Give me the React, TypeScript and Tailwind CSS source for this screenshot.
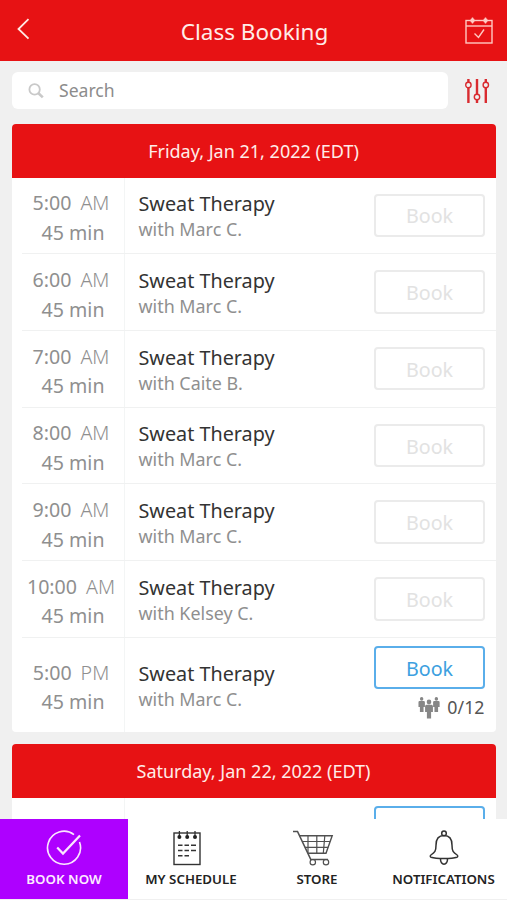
import type { ReactNode } from 'react';

interface ClassItem {
  time: string;
  period: 'AM' | 'PM';
  instructor: string;
  spots?: string;
}

const fridayClasses: ClassItem[] = [
  { time: '5:00', period: 'AM', instructor: 'Marc C.' },
  { time: '6:00', period: 'AM', instructor: 'Marc C.' },
  { time: '7:00', period: 'AM', instructor: 'Caite B.' },
  { time: '8:00', period: 'AM', instructor: 'Marc C.' },
  { time: '9:00', period: 'AM', instructor: 'Marc C.' },
  { time: '10:00', period: 'AM', instructor: 'Kelsey C.' },
  { time: '5:00', period: 'PM', instructor: 'Marc C.', spots: '0/12' },
];

function BackIcon() {
  return (
    <svg width="14" height="22" viewBox="0 0 14 22" fill="none" stroke="#ffe9e4" strokeWidth="1.8">
      <path d="M12.5 1.2 2.5 11l10 9.6" />
    </svg>
  );
}

function CalendarIcon() {
  return (
    <svg width="28" height="28" viewBox="0 0 28 28" fill="none" stroke="#ffc9c2" strokeWidth="1.4">
      <rect x="1" y="3.5" width="26" height="22.5" />
      <path d="M1 9h26" />
      <circle cx="7.5" cy="3.5" r="2.2" fill="#ffc9c2" stroke="none" />
      <circle cx="20.5" cy="3.5" r="2.2" fill="#ffc9c2" stroke="none" />
      <path d="M7.5 .5v6M20.5 .5v6" />
      <path d="m9.5 16.5 4 4 5.5-8" />
    </svg>
  );
}

function SearchIcon() {
  return (
    <svg width="16" height="16" viewBox="0 0 16 16" fill="none" stroke="#c9c9c9">
      <circle cx="6.6" cy="6.4" r="5.2" strokeWidth="1.8" />
      <path d="m10.2 10 4.6 4.4" strokeWidth="2.6" />
    </svg>
  );
}

function FilterIcon() {
  return (
    <svg width="26" height="26" viewBox="0 0 26 26" fill="none" stroke="#d92b30">
      <path d="M4.4 1v3.4M4.4 9.6V25M13 1v15.4M13 21.6V25M21.8 1v3.4M21.8 9.6V25" strokeWidth="2.4" />
      <circle cx="4.4" cy="7" r="2.7" strokeWidth="1.4" />
      <circle cx="13" cy="19" r="2.7" strokeWidth="1.4" />
      <circle cx="21.8" cy="7" r="2.7" strokeWidth="1.4" />
    </svg>
  );
}

function PeopleIcon() {
  return (
    <svg width="22" height="22" viewBox="0 0 23 22" preserveAspectRatio="none" fill="#868686">
      <circle cx="3.8" cy="1.9" r="1.8" />
      <path d="M1.6 4h4.4q1.2 0 1.2 1.2V10H5.8v5H2v-5H.5V5.2Q.5 4 1.6 4Z" />
      <circle cx="19.2" cy="1.9" r="1.8" />
      <path d="M17 4h4.4q1.2 0 1.2 1.2V10H21v5h-3.800v-5h-1.4V5.2Q15.800 4 17 4Z" />
      <circle cx="11.5" cy="5" r="2.4" />
      <path d="M9 7.700h5q1.6 0 1.6 1.6V15h-1.900v6.500H9.300V15H7.400V9.300Q7.400 7.700 9 7.700Z" />
    </svg>
  );
}

function CheckCircleIcon() {
  return (
    <svg width="36" height="36" viewBox="0 0 36 36" fill="none" stroke="#fbe6ff" strokeWidth="1.6">
      <path d="M28 4.600A16.500 16.500 0 1 0 33.500 12" />
      <path d="m11.200 17.600 5.800 6L34 5.600" strokeWidth="2.200" />
    </svg>
  );
}

function ScheduleIcon() {
  return (
    <svg width="28" height="36" viewBox="0 0 28 36" fill="none" stroke="#333">
      <rect x="1" y="3" width="26" height="31.5" strokeWidth="1.4" />
      <path d="M6.4 1v6M14.2 1v6M22 1v6" strokeWidth="1.3" />
      <g fill="#222" stroke="none">
        <circle cx="6.4" cy="7" r="2" />
        <circle cx="14.2" cy="7" r="2" />
        <circle cx="22" cy="7" r="2" />
      </g>
      <path d="M5 15.300h4.500M11.500 15.300H16M18 15.300h5M5 20.500h4.500M11.500 20.500H16M18 20.500h5M5 25.700h4.500M11.500 25.700H16" strokeWidth="1.6" />
    </svg>
  );
}

function CartIcon() {
  return (
    <svg width="42" height="36" viewBox="0 0 42 36" fill="none" stroke="#505050" strokeWidth="1.2">
      <path d="M1 1.500h4.500L18.800 29.500H36" strokeWidth="1.6" />
      <path d="M7.500 5.800h32.700l-6.200 17.500H15.800" strokeWidth="1.400" />
      <path d="M10.200 11.500h28M12.800 17.300h23.400M16 5.800v17M24.800 5.800v17.500M32.800 5.800l-1.500 17.500" />
      <circle cx="20.800" cy="32.200" r="2.700" />
      <circle cx="34" cy="32.200" r="2.700" />
    </svg>
  );
}

function BellIcon() {
  return (
    <svg width="30" height="36" viewBox="0 0 30 36" fill="none" stroke="#333" strokeWidth="1.5">
      <circle cx="15" cy="3.400" r="2.300" />
      <path d="M15 5.600c-6 0-8 4.300-8 9.600 0 6-1.200 7.200-5.100 9.800-1 .8-.8 1.800.2 2.200 2.600.9 6.600 1.300 12.900 1.300s10.300-.4 12.900-1.300c1-.4 1.200-1.400.2-2.200-3.900-2.600-5.100-3.800-5.100-9.800 0-5.300-2-9.600-8-9.600Z" />
      <path d="M11.500 28.500c-.4 7.600 7.400 7.600 7 0" />
    </svg>
  );
}

function BookButton({ active = false, label = 'Book' }: { active?: boolean; label?: string }) {
  return (
    <button
      className={
        active
          ? 'block h-[43.500px] w-[111px] shrink-0 rounded-[4px] border-2 border-[#5aaeea] pt-[2px] pl-px text-[19.7px] leading-none text-[#3d9fe0]'
          : 'block h-[43.500px] w-[111px] shrink-0 rounded-[4px] border-2 border-[#ebebeb] pt-[2px] pl-px text-[19.7px] leading-none text-[#e2e2e2]'
      }
    >
      {label}
    </button>
  );
}

function DayHeader({ children }: { children: ReactNode }) {
  return (
    <h2 className="flex h-[54px] shrink-0 items-center justify-center rounded-t-[4px] bg-[#e71214] pt-px text-[18px] text-[#ffece8]">
      {children}
    </h2>
  );
}

function ClassRow({ item, last }: { item: ClassItem; last: boolean }) {
  return (
    <div className={last ? 'flex h-[94px]' : 'flex h-[76.7px]'}>
      <div className="w-[10px] shrink-0" />
      <div className={last ? 'flex flex-1' : 'flex flex-1 border-b-[1.5px] border-[#f0f1f1]'}>
        <div className="flex w-[103px] shrink-0 flex-col justify-center border-r-[1.5px] border-[#f3f5f5] pt-[5px] text-center text-[19.6px] leading-[29.5px] text-[#8f8f8f]">
          <p className="pr-[3px] whitespace-nowrap">
            {item.time}
            <span className="ml-[9px] font-light">{item.period}</span>
          </p>
          <p className="pl-px">45 min</p>
        </div>
        <div className="flex flex-1 flex-col justify-center pt-[2px] pl-[14px]">
          <h3 className="text-[19.8px] leading-[26px] text-[#333]">Sweat Therapy</h3>
          <p className="text-[17.9px] leading-[24px] text-[#8f8f8f]">with {item.instructor}</p>
        </div>
        <div className={last ? 'flex flex-col items-end pt-[8px] pr-[11px]' : 'flex flex-col items-end justify-center pr-[11px]'}>
          <BookButton active={!!item.spots} />
          {item.spots && (
            <div className="mt-[6px] flex items-center gap-[7px] text-[17.8px] leading-[24px] text-[#555]">
              <div className="pt-[2px]">
                <PeopleIcon />
              </div>
              <span>{item.spots}</span>
            </div>
          )}
        </div>
      </div>
    </div>
  );
}

const tabs = [
  { label: 'BOOK NOW', icon: <CheckCircleIcon />, className: 'w-[128px] bg-[#ae00ff] text-[#fdebff]', iconClass: '' },
  { label: 'MY SCHEDULE', icon: <ScheduleIcon />, className: 'w-[126px] text-[#222]', iconClass: 'pr-[8px]' },
  { label: 'STORE', icon: <CartIcon />, className: 'w-[126px] text-[#222]', iconClass: 'pr-[9px]' },
  { label: 'NOTIFICATIONS', icon: <BellIcon />, className: 'w-[127px] text-[#222]', iconClass: '' },
];

export default function App() {
  return (
    <div className="flex h-[900px] w-[507px] flex-col overflow-hidden bg-[#f0f0f0] font-['Noto_Sans',sans-serif]">
      <header className="flex h-[61px] shrink-0 items-center justify-between bg-[#e71214] pr-[14px] pl-[16px]">
        <div className="flex w-[28px] pb-[4px]">
          <BackIcon />
        </div>
        <h1 className="pt-[2px] text-[22.5px] text-[#ffece8]">Class Booking</h1>
        <CalendarIcon />
      </header>

      <div className="mt-[11px] flex h-[36.5px] shrink-0 items-center px-[12px]">
        <div className="flex h-full w-[436px] items-center rounded-[6px] bg-white pl-[16px]">
          <div className="pt-[2px]">
            <SearchIcon />
          </div>
          <span className="ml-[15px] text-[17.6px] text-[#8c8c8c]">Search</span>
        </div>
        <div className="ml-[16px] pt-px">
          <FilterIcon />
        </div>
      </div>

      <main className="flex min-h-0 flex-1 flex-col overflow-hidden px-[11.5px] pt-[15px]">
        <section className="shrink-0 rounded-[4px] bg-white">
          <DayHeader>Friday, Jan 21, 2022 (EDT)</DayHeader>
          {fridayClasses.map((item, index) => (
            <ClassRow key={index} item={item} last={index === fridayClasses.length - 1} />
          ))}
        </section>

        <section className="mt-[12.2px] shrink-0 rounded-[4px] bg-white">
          <DayHeader>Saturday, Jan 22, 2022 (EDT)</DayHeader>
          <div className="flex h-[94px]">
            <div className="w-[113px] border-r-[1.5px] border-[#f3f5f5]" />
            <div className="flex flex-1 justify-end pt-[8px] pr-[11px]">
              <BookButton active label="" />
            </div>
          </div>
        </section>
      </main>

      <nav className="flex h-[81px] shrink-0 border-b border-[#f0f0f0] bg-white">
        {tabs.map((tab) => (
          <button key={tab.label} className={`flex shrink-0 flex-col items-center pt-[11px] ${tab.className}`}>
            <span className={tab.iconClass}>{tab.icon}</span>
            <span className="mt-[4px] text-[13.3px] leading-[18px] font-semibold whitespace-nowrap">{tab.label}</span>
          </button>
        ))}
      </nav>
    </div>
  );
}
